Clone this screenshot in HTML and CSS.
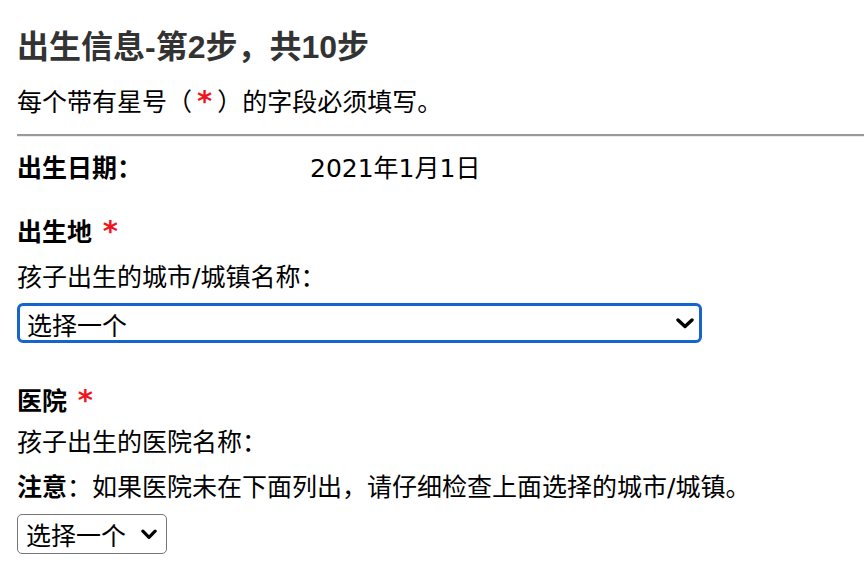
FILE: index.html
```html
<!DOCTYPE html>
<html lang="zh-CN">
<head>
<meta charset="utf-8">
<title>出生信息</title>
<link rel="stylesheet" href="styles.css">
</head>
<body>
<main class="page">
  <h2 class="title">出生信息-第2步，共10步</h2>
  <p class="intro">每个带有星号（<span class="req req-inline">*</span>）的字段必须填写。</p>
  <hr class="rule">
  <div class="dob">
    <span class="dob-label">出生日期：</span>
    <span class="dob-value">2021年1月1日</span>
  </div>

  <div class="field field-place">
    <div class="label">出生地 <span class="req">*</span></div>
    <div class="desc">孩子出生的城市/城镇名称：</div>
    <div class="select-wrap wide focused">
      <select class="sel"><option>选择一个</option></select>
      <svg class="chev" viewBox="0 0 18 11" width="18" height="11" aria-hidden="true"><path d="M2 2 L9 8.5 L16 2" fill="none" stroke="#000" stroke-width="3.4" stroke-linecap="round" stroke-linejoin="round"/></svg>
    </div>
  </div>

  <div class="field field-hosp">
    <div class="label">医院 <span class="req">*</span></div>
    <div class="desc desc-tight">孩子出生的医院名称：</div>
    <div class="note"><b>注意</b>：如果医院未在下面列出，请仔细检查上面选择的城市/城镇。</div>
    <div class="select-wrap small">
      <select class="sel"><option>选择一个</option></select>
      <svg class="chev" viewBox="0 0 17 11" width="16" height="11" aria-hidden="true"><path d="M2 2 L8.5 8.5 L15 2" fill="none" stroke="#000" stroke-width="3.4" stroke-linecap="round" stroke-linejoin="round"/></svg>
    </div>
  </div>
</main>
</body>
</html>
```

FILE: styles.css
```css
html, body {
  margin: 0;
  padding: 0;
  background: #fff;
}

body {
  font-family: "DejaVu Sans", "Noto Sans CJK SC", sans-serif;
  font-size: 25px;
  color: #000;
}

.page {
  padding: 27px 0 0 17px;
  width: 900px;
}

.title {
  margin: 0;
  font-size: 32px;
  line-height: 40px;
  font-weight: bold;
  color: #333;
  font-family: "Liberation Sans", "Noto Sans CJK SC", sans-serif;
}

.intro {
  margin: 18px 0 0;
  line-height: 36px;
}

.req {
  color: #f0141e;
  font-weight: bold;
  font-family: "DejaVu Sans", sans-serif;
  font-size: 29px;
  line-height: 1;
  margin-left: 2px;
}

.req-inline {
  margin: 0 5px 0 5px;
}

.rule {
  margin: 13px 0 0;
  height: 0;
  border: 0;
  border-top: 2px solid #9a9a9a;
  border-bottom: 1px solid #ececec;
}

.dob {
  margin-top: 14px;
  display: grid;
  grid-template-columns: 293px auto;
  line-height: 36px;
}

.dob-label {
  font-weight: bold;
}

.field-place {
  margin-top: 28px;
}

.field-hosp {
  margin-top: 41px;
}

.label {
  font-weight: bold;
  line-height: 36px;
  height: 36px;
}

.desc {
  margin-top: 9px;
  line-height: 36px;
}

.desc-tight {
  margin-top: 5px;
}

.note {
  margin-top: 9px;
  line-height: 36px;
}

.note b {
  font-weight: bold;
}

.select-wrap {
  position: relative;
  display: flex;
  margin-top: 7px;
  height: 40px;
}

.select-wrap.small {
  margin-top: 8px;
  width: 150px;
}

.select-wrap.wide {
  width: 685px;
}

.sel {
  -webkit-appearance: none;
  appearance: none;
  box-sizing: border-box;
  display: block;
  flex: 1 1 auto;
  width: 100%;
  height: 40px;
  min-height: 40px;
  margin: 0;
  padding: 0 0 0 8px;
  font-family: "Noto Sans CJK SC", sans-serif;
  font-size: 25px;
  color: #000;
  background: #fff;
  border: 1.5px solid #767676;
  border-radius: 5px;
  outline: none;
}

.focused .sel {
  border: 3px solid #1664cc;
  border-radius: 6px;
  padding-left: 7px;
}

.chev {
  position: absolute;
  right: 8px;
  top: 15px;
  pointer-events: none;
}

.small .chev {
  right: 10px;
  top: 15px;
}
```
